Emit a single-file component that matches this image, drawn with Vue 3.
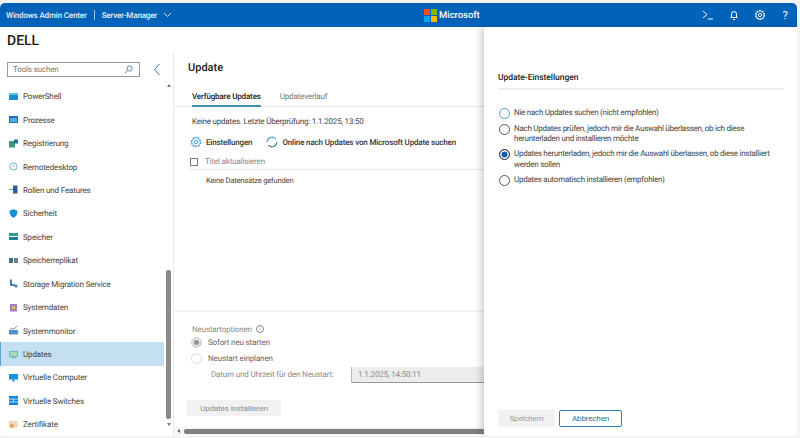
<template>
  <div class="shell">
    <header class="topbar">
      <div class="top-left">
        <span class="brand">Windows Admin Center</span>
        <span class="top-sep"></span>
        <span class="brand">Server-Manager</span>
        <svg class="chev" width="9" height="6" viewBox="0 0 9 6"><path d="M1 1l3.5 3.5L8 1" fill="none" stroke="#cfe3f7" stroke-width="1"/></svg>
      </div>
      <div class="ms-logo">
        <svg width="13" height="13" viewBox="0 0 13 13">
          <rect width="6" height="6" fill="#f25022"/>
          <rect x="7" width="6" height="6" fill="#7fba00"/>
          <rect y="7" width="6" height="6" fill="#00a4ef"/>
          <rect x="7" y="7" width="6" height="6" fill="#ffb900"/>
        </svg>
        <span>Microsoft</span>
      </div>
      <div class="top-icons">
        <svg width="12" height="12" viewBox="0 0 12 12"><path d="M1 2l4 3.5L1 9M6 10h5" fill="none" stroke="#fff" stroke-width="1"/></svg>
        <svg width="12" height="12" viewBox="0 0 12 12"><path d="M3.5 8.5V5a2.5 2.5 0 0 1 5 0v3.5zM2.5 8.5h7M5 10.5h2" fill="none" stroke="#fff" stroke-width="1"/></svg>
        <svg width="12" height="12" viewBox="0 0 12 12"><circle cx="6" cy="6" r="4.2" fill="none" stroke="#fff" stroke-width="1.4" stroke-dasharray="2 .6"/><circle cx="6" cy="6" r="1.6" fill="none" stroke="#fff"/></svg>
        <span class="help">?</span>
      </div>
    </header>

    <div class="body">
      <h1 class="server">DELL</h1>
      <div class="columns">
        <aside class="sidebar">
          <div class="search-row">
            <div class="search">
              <span>Tools suchen</span>
              <svg width="9" height="9" viewBox="0 0 9 9"><circle cx="5.5" cy="3.5" r="2.6" fill="none" stroke="#5b86ad"/><path d="M3.6 5.4L1 8" stroke="#5b86ad"/></svg>
            </div>
            <svg class="collapse" width="8" height="13" viewBox="0 0 8 13"><path d="M6.5 1L1.5 6.5l5 5.5" fill="none" stroke="#2b7cb8" stroke-width="1"/></svg>
          </div>
          <div class="tool-area">
            <ul class="tools">
              <li v-for="tool in tools" :key="tool.name" :class="{ active: tool.name === 'Updates' }">
                <svg width="9" height="9" viewBox="0 0 9 9" v-html="tool.icon"></svg>
                <span>{{ tool.name }}</span>
              </li>
            </ul>
            <div class="vscroll">
              <span class="arrow up"></span>
              <span class="thumb"></span>
              <span class="arrow down"></span>
            </div>
          </div>
        </aside>

        <main class="content">
          <h2>Update</h2>
          <div class="tabs">
            <span class="tab on">Verfügbare Updates</span>
            <span class="tab">Updateverlauf</span>
          </div>
          <p class="status">Keine updates. Letzte Überprüfung: 1.1.2025, 13:50</p>
          <div class="toolbar">
            <span class="action">
              <svg width="12" height="12" viewBox="0 0 12 12"><circle cx="6" cy="6" r="4.4" fill="none" stroke="#4a9bd8" stroke-width="1.5" stroke-dasharray="2 .7"/><circle cx="6" cy="6" r="1.8" fill="none" stroke="#4a9bd8"/></svg>
              Einstellungen
            </span>
            <span class="action">
              <svg width="12" height="12" viewBox="0 0 12 12"><path d="M1.2 6a4.8 4.8 0 0 1 8.4-3.2" fill="none" stroke="#3c9ad6" stroke-width="1.1"/><path d="M10.8 6a4.8 4.8 0 0 1-8.4 3.2" fill="none" stroke="#4b7f98" stroke-width="1.1"/></svg>
              Online nach Updates von Microsoft Update suchen
            </span>
          </div>
          <div class="table-head">
            <span class="check"></span>
            <span>Titel aktualisieren</span>
          </div>
          <div class="empty">Keine Datensätze gefunden</div>

          <section class="restart">
            <div class="restart-title">
              Neustartoptionen
              <span class="info">i</span>
            </div>
            <label class="opt"><span class="dot filled"></span>Sofort neu starten</label>
            <label class="opt"><span class="dot"></span>Neustart einplanen</label>
            <div class="when">
              <span class="when-label">Datum und Uhrzeit für den Neustart:</span>
              <span class="when-input">1.1.2025, 14:50:11</span>
            </div>
            <button class="install" disabled>Updates installieren</button>
          </section>
          <div class="hscroll">
            <span class="harrow"></span>
            <span class="hthumb"></span>
          </div>
        </main>
      </div>

      <div class="panel">
        <div class="panel-title">Update-Einstellungen</div>
        <div class="panel-options">
          <label v-for="opt in options" :key="opt.text" class="popt">
            <span class="pdot" :class="opt.state"></span>
            <span>{{ opt.text }}</span>
          </label>
        </div>
        <div class="panel-actions">
          <button class="save" disabled>Speichern</button>
          <button class="cancel">Abbrechen</button>
        </div>
      </div>
    </div>
  </div>
</template>

<script setup>
const tools = [
  { name: 'PowerShell', icon: '<rect y="1" width="9" height="7" fill="#1c8fd0"/><rect y="1" width="9" height="2" fill="#59c3e8"/>' },
  { name: 'Prozesse', icon: '<rect y="1" width="9" height="7" fill="#1b6fb8"/><rect x="1" y="3" width="7" height="4" fill="#5aa9de"/>' },
  { name: 'Registrierung', icon: '<rect y="2" width="6" height="6.5" fill="#3d9a7b"/><rect x="5" y="0.5" width="4" height="4" fill="#2d6f9f"/>' },
  { name: 'Remotedesktop', icon: '<circle cx="4.5" cy="4.5" r="3.6" fill="none" stroke="#6ab5d0"/><path d="M4.5 2.5v2h2" fill="none" stroke="#8fc7da" stroke-width=".8"/>' },
  { name: 'Rollen und Features', icon: '<rect x="4" y="0.5" width="4.5" height="8" fill="#2d5f8f"/><path d="M0 4.5h4" stroke="#6a9ac0"/>' },
  { name: 'Sicherheit', icon: '<path d="M4.5.3l4 1.5c0 3.6-1.4 5.8-4 7-2.6-1.2-4-3.4-4-7z" fill="#0f8fd8"/>' },
  { name: 'Speicher', icon: '<rect y="1" width="9" height="3" fill="#2f9e8f"/><rect y="5" width="9" height="3" fill="#1c7f9f"/>' },
  { name: 'Speicherreplikat', icon: '<rect y="2" width="4" height="5" fill="#47708f"/><rect x="5" y="2" width="4" height="5" fill="#6b8397"/>' },
  { name: 'Storage Migration Service', icon: '<path d="M2 .5v5.5h4" fill="none" stroke="#1d5f8f" stroke-width="1.6"/><circle cx="7" cy="7" r="1.6" fill="#3d7fa8"/>' },
  { name: 'Systemdaten', icon: '<rect x="1" y="1" width="7" height="7.5" fill="#a77fc8"/><rect x="3" y="3" width="3" height="3" fill="#e0b860"/>' },
  { name: 'Systemmonitor', icon: '<rect y="4" width="9" height="4.5" fill="#5a8fc8"/><path d="M1 4l2-2 2 1 3-3" fill="none" stroke="#7a6fc0" stroke-width=".8"/>' },
  { name: 'Updates', icon: '<rect y="1" width="9" height="6" fill="#6fb8c8"/><rect x="1" y="2" width="7" height="4" fill="#a8d8b8"/><rect x="2" y="7.3" width="5" height="1" fill="#7aa8c0"/>' },
  { name: 'Virtuelle Computer', icon: '<rect y="1" width="9" height="5.5" fill="#1d8fdc"/><rect x="3.5" y="6.5" width="2" height="2" fill="#1d6fb0"/>' },
  { name: 'Virtuelle Switches', icon: '<rect width="9" height="9" fill="#1384d8"/><path d="M0 3h9M0 6h9M4.5 3v3" stroke="#fff" stroke-width=".7"/>' },
  { name: 'Zertifikate', icon: '<rect y="1" width="9" height="6.5" fill="#f6d8b8"/><circle cx="3" cy="6" r="2" fill="#ee9a58"/>' }
]

const options = [
  { text: 'Nie nach Updates suchen (nicht empfohlen)', state: 'focus' },
  { text: 'Nach Updates prüfen, jedoch mir die Auswahl überlassen, ob ich diese herunterladen und installieren möchte', state: '' },
  { text: 'Updates herunterladen, jedoch mir die Auswahl überlassen, ob diese installiert werden sollen', state: 'selected' },
  { text: 'Updates automatisch installieren (empfohlen)', state: '' }
]
</script>

<style>
html, body {
  margin: 0;
  background: #f3f3f3;
}
</style>

<style scoped>
.shell {
  width: 797px;
  height: 433px;
  margin-top: 3px;
  background: #fff;
  border-radius: 5px 5px 4px 4px;
  overflow: hidden;
  display: flex;
  flex-direction: column;
  font-family: Roboto, "Open Sans", sans-serif;
  font-size: 8px;
  letter-spacing: -0.15px;
  text-rendering: geometricPrecision;
  color: #333;
}

.topbar {
  height: 24px;
  flex: none;
  background: #0062b8;
  color: #fff;
  display: grid;
  grid-template-columns: 418px auto 1fr;
  align-items: center;
  padding: 0 7px 0 6px;
}

.top-left {
  display: flex;
  align-items: center;
  gap: 7px;
}

.brand {
  font-weight: 500;
  color: #e6f0fa;
}

.top-sep {
  width: 1px;
  height: 10px;
  background: #9cc6ea;
}

.chev {
  margin-left: -1px;
}

.ms-logo {
  display: flex;
  align-items: center;
  gap: 2px;
  font-size: 9.5px;
  letter-spacing: -0.05px;
  font-weight: 500;
}

.top-icons {
  display: flex;
  justify-content: flex-end;
  align-items: center;
  gap: 14px;
}

.help {
  font-size: 11px;
  width: 10px;
  text-align: center;
}

.body {
  position: relative;
  flex: 1;
  display: flex;
  flex-direction: column;
  min-height: 0;
}

.server {
  margin: 0;
  height: 25px;
  padding: 5px 0 0 7px;
  box-sizing: border-box;
  font-size: 14px;
  letter-spacing: 0;
  line-height: 18px;
  font-weight: 500;
  color: #1a1a1a;
}

.columns {
  flex: 1;
  display: flex;
  min-height: 0;
}

.sidebar {
  width: 173px;
  flex: none;
  display: flex;
  flex-direction: column;
  border-right: 1px solid #e9e9e9;
}

.search-row {
  display: flex;
  align-items: center;
  gap: 13px;
  padding: 10px 0 0 7px;
}

.search {
  width: 133px;
  height: 15px;
  box-sizing: border-box;
  border: 1px solid #9a9a9a;
  display: flex;
  align-items: center;
  justify-content: space-between;
  padding: 0 6px 0 5px;
  color: #777;
}

.tool-area {
  flex: 1;
  display: flex;
  min-height: 0;
  padding-top: 7.5px;
}

.tools {
  list-style: none;
  margin: 0;
  padding: 0;
  width: 164px;
  flex: none;
}

.tools li {
  height: 23.45px;
  display: flex;
  align-items: center;
  gap: 5px;
  padding-left: 9px;
  box-sizing: border-box;
  color: #444;
}

.tools li span {
  padding-top: 1px;
}

.tools li.active {
  background: #c4dff1;
  border-left: 1px solid #5ba3d4;
  padding-left: 8px;
}

.vscroll {
  margin-left: 2px;
  width: 5px;
  margin-top: -7px;
  display: flex;
  flex-direction: column;
  align-items: center;
  padding-bottom: 10px;
}

.thumb {
  margin-top: auto;
  width: 5px;
  height: 149px;
  background: #8a8a8a;
  border-radius: 2px;
}

.arrow {
  width: 0;
  height: 0;
  border-left: 2.5px solid transparent;
  border-right: 2.5px solid transparent;
}

.arrow.up {
  border-bottom: 3px solid #777;
  margin-top: 6px;
}

.arrow.down {
  border-top: 3px solid #777;
  margin-top: 4px;
}

.content {
  flex: 1;
  position: relative;
  display: flex;
  flex-direction: column;
  padding-left: 14px;
  min-width: 0;
}

.content h2 {
  margin: 0;
  height: 29px;
  font-size: 11px;
  letter-spacing: 0;
  line-height: 31px;
  font-weight: 500;
  color: #222;
}

.tabs {
  display: flex;
  gap: 19px;
  height: 23px;
  margin: 3px 0 0 -14px;
  padding: 4px 0 0 18px;
  border-bottom: 1px solid #e5e5e5;
  box-sizing: border-box;
}

.tab {
  height: 19px;
  line-height: 17px;
  color: #777;
  box-sizing: border-box;
}

.tab.on {
  color: #222;
  font-weight: 500;
  border-bottom: 2px solid #3f8fb5;
}

.status {
  margin: 0;
  padding: 9px 0 0 4px;
  line-height: 11px;
  letter-spacing: -0.2px;
  color: #444;
}

.toolbar {
  display: flex;
  gap: 14px;
  padding: 8px 0 0 2px;
  height: 24px;
  box-sizing: border-box;
}

.action {
  display: flex;
  align-items: center;
  gap: 4px;
  font-weight: 500;
  color: #333;
  height: 14px;
}

.table-head {
  display: flex;
  align-items: center;
  gap: 7px;
  height: 19px;
  padding: 3px 0 0 2px;
  border-bottom: 1px solid #e8e8e8;
  color: #888;
  box-sizing: border-box;
}

.check {
  width: 6px;
  height: 6px;
  border: 1px solid #777;
}

.empty {
  padding: 5px 0 0 18px;
  line-height: 11px;
  font-size: 7.6px;
  letter-spacing: -0.2px;
  color: #444;
}

.restart {
  margin: 124px 0 0 -14px;
  padding: 12px 0 0 18px;
  border-top: 2px solid #f2f2f2;
  flex: 1;
  color: #8a8a8a;
}

.restart-title {
  display: flex;
  align-items: center;
  gap: 4px;
  height: 10px;
  margin-bottom: 1px;
}

.info {
  width: 6px;
  height: 6px;
  border: 1px solid #888;
  border-radius: 50%;
  font-size: 5px;
  line-height: 6px;
  text-align: center;
}

.opt {
  display: flex;
  align-items: center;
  gap: 6px;
  height: 15.5px;
  color: #666;
  margin-left: -1px;
}

.dot {
  width: 9px;
  height: 9px;
  border: 1px solid #ddd;
  border-radius: 50%;
  box-sizing: content-box;
}

.dot.filled {
  background: #8f8f8f;
  box-shadow: inset 0 0 0 2px #e5e5e5;
}

.when {
  display: flex;
  align-items: center;
  padding-left: 19px;
  height: 17px;
}

.when-label {
  width: 140px;
  flex: none;
}

.when-input {
  flex: 1;
  height: 16px;
  line-height: 15px;
  background: #ececec;
  border-bottom: 1px solid #999;
  border-left: 1px solid #bbb;
  padding-left: 6px;
  box-sizing: border-box;
}

.install {
  display: block;
  margin: 17px 0 0 -5px;
  width: 94px;
  height: 16px;
  border: 0;
  padding: 0;
  background: #f1f1f1;
  color: #8c8c8c;
  font: inherit;
  letter-spacing: inherit;
}

.hscroll {
  height: 8px;
  display: flex;
  align-items: center;
  gap: 4px;
  margin: 0 0 1px -14px;
  padding-left: 3px;
  background: #f6f6f6;
  flex: none;
}

.harrow {
  width: 0;
  height: 0;
  border-top: 2.5px solid transparent;
  border-bottom: 2.5px solid transparent;
  border-right: 3px solid #666;
}

.hthumb {
  flex: 1;
  height: 5px;
  background: #808080;
  border-radius: 2px;
}

.panel {
  position: absolute;
  top: 0;
  bottom: 0;
  right: 0;
  width: 313px;
  box-sizing: border-box;
  background: #fff;
  box-shadow: -4px 0 6px rgba(0, 0, 0, 0.16);
  border-radius: 0 0 4px 4px;
  padding: 0 13px 0 14px;
  display: flex;
  flex-direction: column;
}

.panel-title {
  height: 24px;
  margin-top: 39px;
  box-sizing: border-box;
  padding-top: 6px;
  line-height: 12px;
  font-size: 8.5px;
  letter-spacing: -0.05px;
  font-weight: 500;
  color: #222;
  border-bottom: 2px solid #eeeeee;
}

.panel-options {
  margin-top: 18px;
  display: flex;
  flex-direction: column;
  gap: 4.6px;
}

.popt {
  display: flex;
  gap: 4px;
  line-height: 10.6px;
  color: #444;
  padding-right: 4px;
  letter-spacing: -0.27px;
}

.pdot {
  flex: none;
  width: 11px;
  height: 11px;
  margin-left: 1px;
  border: 1px solid #555;
  border-radius: 50%;
  box-sizing: border-box;
}

.pdot.focus {
  border-color: #4a9ec0;
}

.pdot.selected {
  border-color: #333;
  background: #0a5fb4;
  box-shadow: inset 0 0 0 1.5px #fff;
}

.panel-actions {
  margin-top: auto;
  margin-bottom: 9px;
  display: flex;
  gap: 4px;
}

.panel-actions button {
  height: 17px;
  padding: 0;
  font: inherit;
  letter-spacing: inherit;
}

.save {
  width: 57px;
  background: #f2f2f2;
  border: 0;
  color: #9a9a9a;
}

.cancel {
  width: 63px;
  background: #fff;
  border: 1px solid #2a86b8;
  border-radius: 2px;
  color: #1f6fa5;
  font-weight: 500;
}
</style>
